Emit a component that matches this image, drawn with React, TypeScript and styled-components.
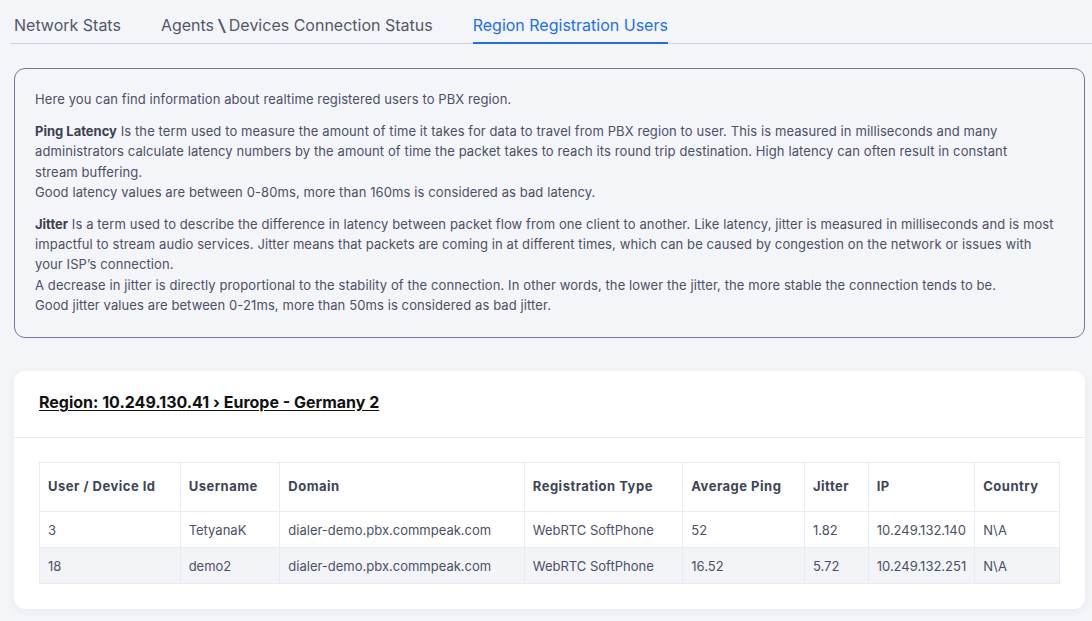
import React from "react";
import styled, { createGlobalStyle } from "styled-components";

const Global = createGlobalStyle`
  html, body { margin: 0; padding: 0; background: #f4f5f9; }
  body { font-family: "Inter", "Open Sans", sans-serif; color: #4a5065; }
  * { box-sizing: border-box; }
`;

const Page = styled.div`
  width: 1092px;
  height: 621px;
  overflow: hidden;
  background: #f4f5f9;
  padding: 0 7px 0 14px;
`;

const Tabs = styled.div`
  display: flex;
  gap: 40px;
  height: 44px;
  margin-left: -4px;
  padding-left: 4px;
  margin-right: -7px;
  border-bottom: 1px solid #cfd4de;
`;

const Tab = styled.div<{ $active?: boolean }>`
  font-size: 16px;
  line-height: 20px;
  padding-top: 15px;
  color: ${(p) => (p.$active ? "#1b6ff0" : "#52586a")};
  border-bottom: 2px solid ${(p) => (p.$active ? "#1b6ff0" : "transparent")};
  margin-bottom: -1px;
  white-space: nowrap;
`;

const Slash = styled.span`
  display: inline-block;
  margin: 0 4px 0 5px;
  transform: scaleX(1.6);
`;

const InfoBox = styled.div`
  margin-top: 24px;
  border: 1px solid #6e7c99;
  border-radius: 11px;
  padding: 20px 30px 22px 20px;
  font-size: 13px;
  line-height: 20.2px;
  letter-spacing: 0.1px;
  color: #4a5068;
`;

const Para = styled.p`
  margin: 0 0 12px 0;
  &:last-child { margin-bottom: 0; }
  b { font-weight: 700; color: #3a4052; letter-spacing: 0; }
`;

const Card = styled.div`
  margin-top: 33px;
  background: #ffffff;
  border-radius: 11px;
  box-shadow: 0 2px 8px rgba(40, 50, 80, 0.06);
  padding-bottom: 25px;
`;

const CardHeader = styled.div`
  height: 67px;
  padding: 21px 25px 0 25px;
  border-bottom: 1px solid #e9ebef;
`;

const Title = styled.a`
  font-size: 16px;
  font-weight: 700;
  color: #111111;
  text-decoration: underline;
  text-underline-offset: 2px;
`;

const TableWrap = styled.div`
  padding: 24px 25px 0 25px;
`;

const Table = styled.table`
  width: 1021px;
  border-collapse: collapse;
  font-size: 13px;
  color: #4a5068;
`;

const Th = styled.th<{ $w: number }>`
  width: ${(p) => p.$w}px;
  height: 49px;
  text-align: left;
  padding: 0 8px 2px 8px;
  font-weight: 700;
  letter-spacing: 0.5px;
  color: #3d4457;
  border: 1px solid #e8ebef;
  white-space: nowrap;
`;

const Tr = styled.tr<{ $alt?: boolean }>`
  background: ${(p) => (p.$alt ? "#f3f4f8" : "#ffffff")};
`;

const Td = styled.td`
  height: 36px;
  padding: 0 8px;
  border: 1px solid #e8ebef;
  white-space: nowrap;
`;

const cols = [
  { label: "User / Device Id", w: 141 },
  { label: "Username", w: 100 },
  { label: "Domain", w: 245 },
  { label: "Registration Type", w: 159 },
  { label: "Average Ping", w: 122 },
  { label: "Jitter", w: 64 },
  { label: "IP", w: 105 },
  { label: "Country", w: 85 },
];

const rows = [
  ["3", "TetyanaK", "dialer-demo.pbx.commpeak.com", "WebRTC SoftPhone", "52", "1.82", "10.249.132.140", "N\\A"],
  ["18", "demo2", "dialer-demo.pbx.commpeak.com", "WebRTC SoftPhone", "16.52", "5.72", "10.249.132.251", "N\\A"],
];

export default function App() {
  return (
    <Page>
      <Global />
      <Tabs>
        <Tab>Network Stats</Tab>
        <Tab>
          Agents<Slash>\</Slash>Devices Connection Status
        </Tab>
        <Tab $active>Region Registration Users</Tab>
      </Tabs>
      <InfoBox>
        <Para>Here you can find information about realtime registered users to PBX region.</Para>
        <Para>
          <b>Ping Latency</b> Is the term used to measure the amount of time it takes for data to travel from PBX region to user. This is measured in milliseconds and many administrators calculate latency numbers by the amount of time the packet takes to reach its round trip destination. High latency can often result in constant
          <br />
          stream buffering.
          <br />
          Good latency values are between 0-80ms, more than 160ms is considered as bad latency.
        </Para>
        <Para>
          <b>Jitter</b> Is a term used to describe the difference in latency between packet flow from one client to another. Like latency, jitter is measured in milliseconds and is most impactful to stream audio services. Jitter means that packets are coming in at different times, which can be caused by congestion on the network or issues with your ISP’s connection.
          <br />
          A decrease in jitter is directly proportional to the stability of the connection. In other words, the lower the jitter, the more stable the connection tends to be.
          <br />
          Good jitter values are between 0-21ms, more than 50ms is considered as bad jitter.
        </Para>
      </InfoBox>
      <Card>
        <CardHeader>
          <Title>Region: 10.249.130.41 › Europe - Germany 2</Title>
        </CardHeader>
        <TableWrap>
          <Table>
            <thead>
              <tr>
                {cols.map((c) => (
                  <Th key={c.label} $w={c.w}>{c.label}</Th>
                ))}
              </tr>
            </thead>
            <tbody>
              {rows.map((r, i) => (
                <Tr key={i} $alt={i % 2 === 1}>
                  {r.map((v, j) => (
                    <Td key={j}>{v}</Td>
                  ))}
                </Tr>
              ))}
            </tbody>
          </Table>
        </TableWrap>
      </Card>
    </Page>
  );
}
